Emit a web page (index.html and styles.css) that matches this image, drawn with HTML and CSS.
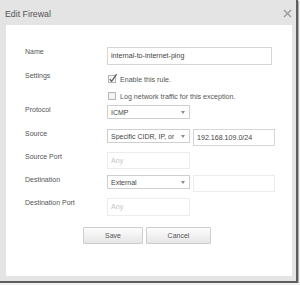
FILE: index.html
```html
<!DOCTYPE html>
<html>
<head>
<meta charset="utf-8">
<link rel="stylesheet" href="styles.css">
</head>
<body>
<div class="window">
  <div class="titlebar">
    <span class="title">Edit Firewal</span>
    <svg class="close" width="9" height="9" viewBox="0 0 9 9"><path d="M1 1L8 8M8 1L1 8" stroke="#9a9a9a" stroke-width="1.4" fill="none"/></svg>
  </div>
  <div class="panel">
    <div class="row r-name">
      <div class="label">Name</div>
      <div class="input name-input">internal-to-internet-ping</div>
    </div>
    <div class="row r-settings">
      <div class="label">Settings</div>
      <div class="checks">
        <div class="check">
          <svg class="cb" width="10" height="11" viewBox="0 0 10 11"><rect x="0.5" y="2.5" width="7" height="7" fill="#f4f4f4" stroke="#b5b5b5"/><path d="M1.8 6.2L3.6 8.3L8.6 1.2" stroke="#555" stroke-width="1.2" fill="none"/></svg>
          <span>Enable this rule.</span>
        </div>
        <div class="check">
          <svg class="cb" width="10" height="11" viewBox="0 0 10 11"><rect x="0.5" y="2.5" width="7" height="7" fill="#f4f4f4" stroke="#b5b5b5"/></svg>
          <span>Log network traffic for this exception.</span>
        </div>
      </div>
    </div>
    <div class="row r-protocol">
      <div class="label">Protocol</div>
      <div class="select"><span class="val">ICMP</span><span class="arrow"></span></div>
    </div>
    <div class="row r-source">
      <div class="label">Source</div>
      <div class="select"><span class="val">Specific CIDR, IP, or</span><span class="arrow"></span></div>
      <div class="input ip-input">192.168.109.0/24</div>
    </div>
    <div class="row r-sport">
      <div class="label">Source Port</div>
      <div class="input port-input placeholder">Any</div>
    </div>
    <div class="row r-dest">
      <div class="label">Destination</div>
      <div class="select"><span class="val">External</span><span class="arrow"></span></div>
      <div class="input ip-input disabled"></div>
    </div>
    <div class="row r-dport">
      <div class="label">Destination Port</div>
      <div class="input port-input dport placeholder">Any</div>
    </div>
    <div class="buttons">
      <div class="btn save">Save</div>
      <div class="btn cancel">Cancel</div>
    </div>
  </div>
</div>
</body>
</html>
```

FILE: styles.css
```css
html, body {
  margin: 0;
  padding: 0;
  background: #f2f2f2;
}
body {
  font-family: "Liberation Sans", Arial, sans-serif;
  color: #555;
}
.window {
  width: 296px;
  height: 281px;
  background: #e4e4e4;
  border-right: 2px solid #5e5e5e;
  border-bottom: 2px solid #5e5e5e;
  box-shadow: 1px 1px 0 #b0b0b0;
  display: flex;
  flex-direction: column;
}
.titlebar {
  height: 25px;
  display: flex;
  align-items: center;
  justify-content: space-between;
  padding: 2px 4px 0 5px;
  box-sizing: border-box;
}
.title {
  font-size: 8.8px;
  color: #555;
}
.close {
  display: block;
  margin-top: -1px;
}
.panel {
  margin: 0 4px 0 6px;
  height: 251px;
  background: #fff;
  padding: 22px 0 0 19px;
  box-sizing: border-box;
}
.row {
  display: flex;
  align-items: flex-start;
}
.label {
  width: 82px;
  flex: none;
  font-size: 7px;
  line-height: 10px;
  color: #555;
}
.r-name { height: 24px; }
.r-settings { height: 34px; }
.r-protocol { height: 24px; }
.r-source { height: 23px; }
.r-sport { height: 23px; }
.r-dest { height: 23px; }
.r-dport { height: 29px; }

.input {
  box-sizing: border-box;
  border: 1px solid #d6d6d6;
  font-size: 7.1px;
  color: #444;
  padding: 0 3px;
  display: flex;
  align-items: center;
  white-space: nowrap;
  overflow: hidden;
}
.name-input {
  width: 165px;
  height: 18px;
}
.ip-input {
  width: 82px;
  height: 17px;
  margin-left: 3px;
}
.port-input {
  width: 83px;
  height: 17px;
  border-color: #ececec;
}
.dport { height: 18px; }
.disabled { border-color: #ececec; }
.placeholder { color: #c4c4c4; }

.select {
  box-sizing: border-box;
  width: 83px;
  height: 14px;
  border: 1px solid #cfcfcf;
  font-size: 7px;
  color: #444;
  display: flex;
  align-items: center;
  justify-content: space-between;
  padding: 0 4px 0 3px;
}
.select .val {
  white-space: nowrap;
  overflow: hidden;
}
.arrow {
  flex: none;
  width: 0;
  height: 0;
  border-left: 2px solid transparent;
  border-right: 2px solid transparent;
  border-top: 3px solid #8a8a8a;
  margin-left: 6px;
}

.checks {
  display: flex;
  flex-direction: column;
}
.check {
  height: 17px;
  display: flex;
  align-items: center;
  font-size: 7.1px;
  color: #555;
}
.cb {
  display: block;
  margin: -2px 2px 0 1px;
}
.check:first-child { margin-top: 0; }

.buttons {
  display: flex;
  gap: 3px;
  margin-left: 58px;
}
.btn {
  box-sizing: border-box;
  height: 17px;
  border: 1px solid #cdcdcd;
  border-radius: 1px;
  background: linear-gradient(#fdfdfd, #e6e6e6);
  font-size: 7px;
  color: #555;
  display: flex;
  align-items: center;
  justify-content: center;
}
.save { width: 60px; }
.cancel { width: 65px; }
```
